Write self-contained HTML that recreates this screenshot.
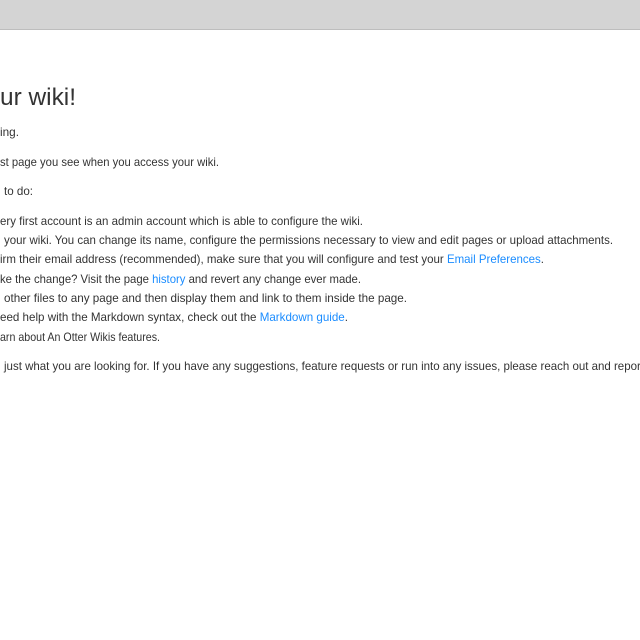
<!DOCTYPE html>
<html><head><meta charset="utf-8"><style>
html,body{margin:0;padding:0;width:640px;height:640px;overflow:hidden;background:#fff}
svg{position:absolute;left:0;top:0}
text{font-family:"Liberation Sans",sans-serif;fill:#333}
.l{fill:#1a8cff}
</style></head><body>
<svg width="640" height="640" viewBox="0 0 640 640">
<rect x="0" y="0" width="640" height="29" fill="#d4d4d4"/>
<rect x="0" y="29" width="640" height="1" fill="#bdbdbd"/>
<text x="0" y="105" font-size="24" textLength="76" lengthAdjust="spacingAndGlyphs">ur wiki!</text>
<text x="0" y="136" font-size="12" textLength="19" lengthAdjust="spacingAndGlyphs">ing.</text>
<text x="0" y="166" font-size="12" textLength="219" lengthAdjust="spacingAndGlyphs">st page you see when you access your wiki.</text>
<text x="4" y="195" font-size="12" textLength="29" lengthAdjust="spacingAndGlyphs">to do:</text>
<text x="0" y="225" font-size="12" textLength="363" lengthAdjust="spacingAndGlyphs">ery first account is an admin account which is able to configure the wiki.</text>
<text x="4" y="244" font-size="12" textLength="609" lengthAdjust="spacingAndGlyphs">your wiki. You can change its name, configure the permissions necessary to view and edit pages or upload attachments.</text>
<text x="0" y="263" font-size="12" textLength="544" lengthAdjust="spacingAndGlyphs">irm their email address (recommended), make sure that you will configure and test your <tspan class="l">Email Preferences</tspan>.</text>
<text x="0" y="283" font-size="12" textLength="361" lengthAdjust="spacingAndGlyphs">ke the change? Visit the page <tspan class="l">history</tspan> and revert any change ever made.</text>
<text x="4" y="302" font-size="12" textLength="403" lengthAdjust="spacingAndGlyphs">other files to any page and then display them and link to them inside the page.</text>
<text x="0" y="321" font-size="12" textLength="348" lengthAdjust="spacingAndGlyphs">eed help with the Markdown syntax, check out the <tspan class="l">Markdown guide</tspan>.</text>
<text x="0" y="341" font-size="12" textLength="160" lengthAdjust="spacingAndGlyphs">arn about An Otter Wikis features.</text>
<text x="4" y="370" font-size="12" textLength="640" lengthAdjust="spacingAndGlyphs">just what you are looking for. If you have any suggestions, feature requests or run into any issues, please reach out and report</text>
</svg>
</body></html>
